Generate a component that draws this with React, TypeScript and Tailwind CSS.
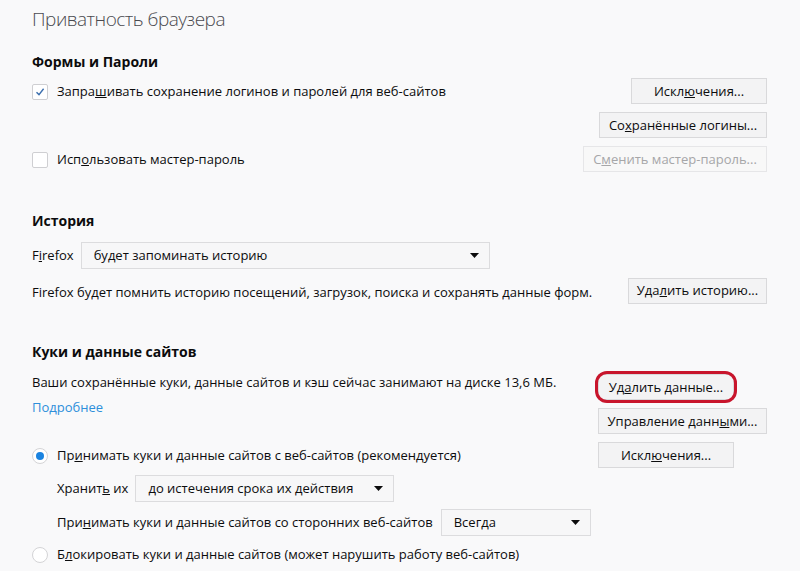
import React from "react";

const Btn = ({ children, w, disabled }: { children: React.ReactNode; w: string; disabled?: boolean }) => (
  <button
    className={
      disabled
        ? `h-[26px] ${w} border border-[#e6e6e8] bg-[#f8f8f8] text-[#a6a6a8] text-[13px] leading-none`
        : `h-[26px] ${w} border border-[#d9d9db] bg-[#f3f3f4] text-[#0c0c0d] text-[13px] leading-none`
    }
  >
    {children}
  </button>
);

const Check = ({ checked }: { checked?: boolean }) => (
  <span className="w-4 h-4 shrink-0 border border-[#cfcfd2] bg-white rounded-[2px] flex items-center justify-center">
    {checked && (
      <svg width="10" height="10" viewBox="0 0 10 10">
        <path d="M1.5 5.2 L4 7.6 L8.6 1.8" fill="none" stroke="#3c6fae" strokeWidth="1.4" />
      </svg>
    )}
  </span>
);

const Radio = ({ checked }: { checked?: boolean }) => (
  <span className="w-4 h-4 shrink-0 rounded-full border border-[#d4d4d6] bg-white flex items-center justify-center">
    {checked && <span className="w-2 h-2 rounded-full bg-[#1a83e0]" />}
  </span>
);

const Select = ({ text, w }: { text: string; w: string }) => (
  <div className={`h-[27px] ${w} border border-[#dcdcde] bg-[#f7f7f8] flex items-center justify-between pl-3 pr-[10px]`}>
    <span>{text}</span>
    <svg width="9" height="5" viewBox="0 0 9 5">
      <path d="M0 0 H9 L4.5 5 Z" fill="#0c0c0d" />
    </svg>
  </div>
);

const Heading = ({ children }: { children: React.ReactNode }) => (
  <h2 className="text-[14px] font-bold leading-5 h-5">{children}</h2>
);

export default function App() {
  return (
    <div className="min-h-[571px] w-[800px] bg-[#f9f9fa] pl-8 pr-[33px] text-[13px] text-[#0c0c0d] font-['Open_Sans',sans-serif] overflow-hidden">
      <h1 className="pt-[5px] text-[19px] leading-[28px] font-light tracking-[-0.5px] text-[#4a4a4f]">Приватность браузера</h1>

      {/* Формы и пароли */}
      <div className="mt-[19px]">
        <Heading>Формы и Пароли</Heading>
        <div className="mt-[6px] flex flex-col gap-[8px]">
          <div className="h-[26px] flex items-center justify-between">
            <label className="flex items-center gap-[9px] pt-[2px]">
              <Check checked />
              <span>Запра<u>ш</u>ивать сохранение логинов и паролей для веб-сайтов</span>
            </label>
            <Btn w="w-[136px]">Искл<u>ю</u>чения...</Btn>
          </div>
          <div className="h-[26px] flex items-center justify-end">
            <Btn w="w-[168px]">Со<u>х</u>ранённые логины...</Btn>
          </div>
          <div className="h-[26px] flex items-center justify-between">
            <label className="flex items-center gap-[9px] pt-[1px]">
              <Check />
              <span>Исп<u>о</u>льзовать мастер-пароль</span>
            </label>
            <Btn w="w-[184px]" disabled>
              С<u>м</u>енить мастер-пароль...
            </Btn>
          </div>
        </div>
      </div>

      {/* История */}
      <div className="mt-[39px]">
        <Heading>История</Heading>
        <div className="mt-[11px] h-[27px] flex items-center gap-[7px]">
          <span>
            F<u>i</u>refox
          </span>
          <Select text="будет запоминать историю" w="w-[409px]" />
        </div>
        <div className="mt-[8px] h-[27px] flex items-center justify-between">
          <span className="pt-[4px]">Firefox будет помнить историю посещений, загрузок, поиска и сохранять данные форм.</span>
          <Btn w="w-[139px]">
            Уда<u>л</u>ить историю...
          </Btn>
        </div>
      </div>

      {/* Куки */}
      <div className="mt-[38px]">
        <Heading>Куки и данные сайтов</Heading>
        <div className="mt-[10px] flex justify-between">
          <div className="flex flex-col">
            <span className="leading-5">Ваши сохранённые куки, данные сайтов и кэш сейчас занимают на диске 13,6 МБ.</span>
            <a className="mt-[5px] leading-5 text-[#2d8fdb] w-fit" href="#">
              Подробнее
            </a>
          </div>
          <div className="pt-[2px] flex flex-col items-start gap-[8px] w-[169px]">
            <div className="relative">
              <Btn w="w-[136px]">
                Уд<u>а</u>лить данные...
              </Btn>
              <span className="absolute -left-[3px] -right-[3px] -top-[3px] -bottom-[3px] rounded-[12px] border-[3px] border-[#c8152c]" />
            </div>
            <Btn w="w-[169px]">
              Управление данн<u>ы</u>ми...
            </Btn>
          </div>
        </div>

        <div className="mt-[8px] h-[26px] flex items-center justify-between">
          <label className="flex items-center gap-[9px] pt-[1px]">
            <Radio checked />
            <span>
              Пр<u>и</u>нимать куки и данные сайтов с веб-сайтов (рекомендуется)
            </span>
          </label>
          <div className="w-[169px]">
            <Btn w="w-[136px]">
              Искл<u>ю</u>чения...
            </Btn>
          </div>
        </div>

        <div className="mt-[7px] pl-[25px] h-[27px] flex items-center gap-[7px]">
          <span>
            Хранит<u>ь</u> их
          </span>
          <Select text="до истечения срока их действия" w="w-[259px]" />
        </div>

        <div className="mt-[7px] pl-[25px] h-[27px] flex items-center gap-[8px]">
          <span>
            При<u>н</u>имать куки и данные сайтов со сторонних веб-сайтов
          </span>
          <Select text="Всегда" w="w-[150px]" />
        </div>

        <div className="mt-[5px] h-[26px] flex items-center">
          <label className="flex items-center gap-[9px] pt-[1px]">
            <Radio />
            <span>
              Б<u>л</u>окировать куки и данные сайтов (может нарушить работу веб-сайтов)
            </span>
          </label>
        </div>
      </div>
    </div>
  );
}
